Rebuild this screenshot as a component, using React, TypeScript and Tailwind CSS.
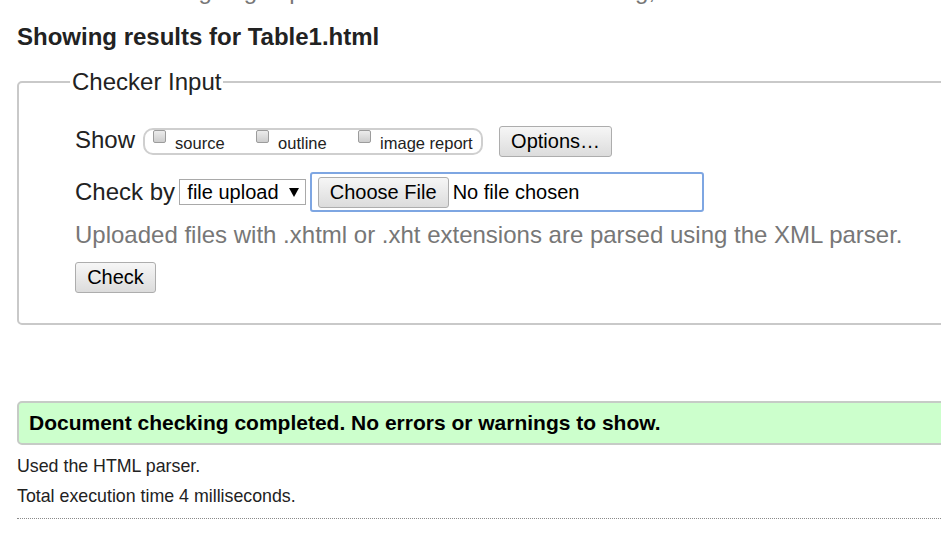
const btn =
  "flex items-center justify-center rounded-[3px] border border-[#adadad] bg-linear-to-b from-[#f6f6f6] to-[#dcdcdc] text-[20px] leading-[29px] text-black";

function Box() {
  return (
    <span className="mt-0 inline-block h-[13px] w-[13px] shrink-0 rounded-[2px] border border-[#9c9c9c] bg-linear-to-b from-[#ececec] to-[#cdcdcd]" />
  );
}

function Opt({ label, w }: { label: string; w?: string }) {
  return (
    <label className={`flex items-start ${w ?? ""}`}>
      <Box />
      <span className="ml-[9px] mt-[3.5px] text-[16.5px] leading-[18px] text-[#222]">{label}</span>
    </label>
  );
}

export default function App() {
  return (
    <div className="h-[547px] w-[941px] overflow-hidden bg-white font-['Liberation_Sans',Arial,sans-serif] text-[#222]">
      <div className="w-[1100px] pl-[17px]">
        <p className="mt-[-23.3px] whitespace-nowrap text-[24px] leading-[28px] text-[#777]">
          This tool is an ongoing experiment in better HTML checking, and its behavior remains subject to change.
        </p>

        <h2 className="mt-[18px] text-[24px] font-bold leading-[28px] text-[#222]">
          Showing results for Table1.html
        </h2>

        {/* checker form */}
        <fieldset className="mt-[17.3px] w-[1060px] rounded-[5px] border-2 border-[#c9c9c9] pb-[30.5px] pl-[56px] pt-[30px]">
          <legend className="ml-[-5px] px-[2px] text-[24px] leading-[28px] text-[#222]">Checker Input</legend>

          <div className="flex h-[31px] items-start">
            <span className="text-[24px] leading-[28px]">Show</span>
            <div className="ml-[8px] mt-[2px] flex h-[27px] w-[340px] items-start rounded-[10px] border-2 border-[#cfcfcf] pl-[8px]">
              <Opt label="source" w="w-[103px]" />
              <Opt label="outline" w="w-[102px]" />
              <Opt label="image report" />
            </div>
            <button className={`${btn} ml-[16px] h-[31px] w-[113px]`}>Options…</button>
          </div>

          <div className="mt-[15px] flex h-[40px] items-start">
            <span className="mt-[6.4px] text-[24px] leading-[28px]">Check by</span>
            <div className="ml-[4.3px] mt-[7.3px] flex h-[26px] w-[127px] items-center border border-[#a9a9a9] bg-white pl-[7px] text-[20px] leading-[24px] text-black">
              <span>file upload</span>
              <svg className="ml-[10px]" width="10" height="9" viewBox="0 0 10 9">
                <polygon points="0,0 10,0 5,9" fill="#000" />
              </svg>
            </div>
            <div className="ml-[3.3px] flex h-[40px] w-[394px] items-center rounded-[3px] border-2 border-[#7ea6e2] pl-[6px]">
              <button className={`${btn} h-[31px] w-[131px]`}>Choose File</button>
              <span className="ml-[4px] text-[20px] leading-[24px] text-black">No file chosen</span>
            </div>
          </div>

          <p className="mt-[9px] text-[24px] leading-[28px] text-[#777]">
            Uploaded files with .xhtml or .xht extensions are parsed using the XML parser.
          </p>

          <button className={`${btn} mt-[12.7px] h-[31px] w-[81px]`}>Check</button>
        </fieldset>

        {/* result */}
        <div className="mt-[75.4px] h-[44px] w-[1060px] rounded-l-[5px] border-2 border-[#c6cbc6] bg-[#ccffcc] pl-[10px] text-[21px] font-bold leading-[40px] text-black">
          Document checking completed. No errors or warnings to show.
        </div>

        <p className="mt-[6.6px] text-[17.8px] leading-[30px] text-[#222]">Used the HTML parser.</p>
        <p className="text-[17.8px] leading-[30px] text-[#222]">Total execution time 4 milliseconds.</p>

        <div className="mt-[7px] w-[1060px] border-t border-dotted border-[#8a8a8a]" />
      </div>
    </div>
  );
}
